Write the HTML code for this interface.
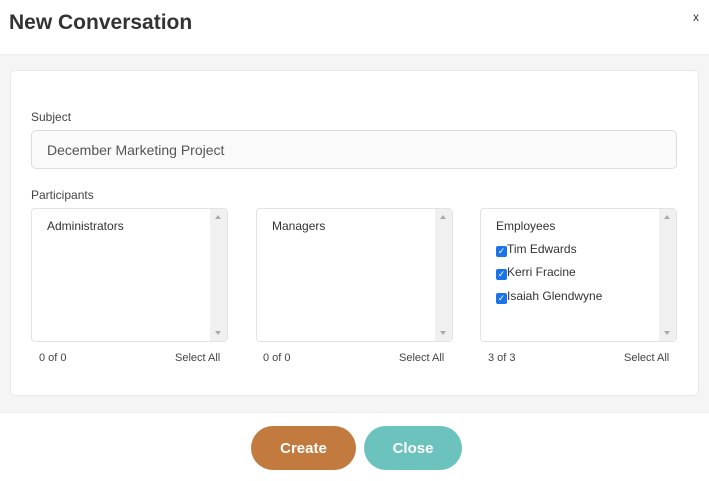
<!DOCTYPE html><html><head><style>
body{margin:0;width:709px;height:481px;background:#fff;font-family:"Liberation Sans",sans-serif;position:relative;overflow:hidden;color:#333}
.a{position:absolute}
h1{position:absolute;left:9px;top:11px;margin:0;font-size:21px;font-weight:bold;color:#333}
.band{left:0;top:54px;width:709px;height:357px;background:#f5f5f5;border-top:1px solid #eee;border-bottom:1px solid #eee}
.card{left:10px;top:70px;width:687px;height:324px;background:#fff;border:1px solid #e8e8e8;border-radius:5px}
.lbl{font-size:12px;color:#444}
.inp{left:31px;top:130px;height:39px;border:1px solid #ddd;border-radius:5px;background:#fafafa;font-size:14px;color:#555;line-height:39px;padding-left:15px;box-sizing:border-box;width:646px}
.box{top:208px;width:197px;height:134px;border:1px solid #e3e3e3;border-radius:4px;box-sizing:border-box;background:#fff;font-size:12px;color:#333}
.sb{position:absolute;right:0;top:0;width:17px;height:100%;background:#f0f0f0}
.sb:before{content:"";position:absolute;left:5px;top:6px;border:3.5px solid transparent;border-bottom:4px solid #aaa;border-top:0}
.sb:after{content:"";position:absolute;left:5px;bottom:6px;border:3.5px solid transparent;border-top:4px solid #aaa;border-bottom:0}
.it{position:absolute;left:15px}
.ck{display:inline-block;width:11px;height:11px;background:#1a73e8;border-radius:2px;vertical-align:-1px;color:#fff;font-size:9px;line-height:11px;text-align:center}
.ft{font-size:11px;color:#444;top:352px}
.btn{top:426px;height:44px;border-radius:22px;color:#fff;font-weight:bold;font-size:15px;line-height:45px;text-align:center}
</style></head><body>
<h1>New Conversation</h1>
<div class="a" style="left:693px;top:10px;font-size:12px">x</div>
<div class="a band"></div>
<div class="a card"></div>
<div class="a lbl" style="left:31px;top:110px">Subject</div>
<div class="a inp">December Marketing Project</div>
<div class="a lbl" style="left:31px;top:188px">Participants</div>
<div class="a box" style="left:31px"><div class="sb"></div><div class="it" style="top:10px">Administrators</div></div>
<div class="a box" style="left:256px"><div class="sb"></div><div class="it" style="top:10px">Managers</div></div>
<div class="a box" style="left:480px"><div class="sb"></div><div class="it" style="top:10px">Employees</div>
<div class="it" style="top:33px"><span class="ck">✓</span>Tim Edwards</div>
<div class="it" style="top:56px"><span class="ck">✓</span>Kerri Fracine</div>
<div class="it" style="top:80px"><span class="ck">✓</span>Isaiah Glendwyne</div></div>
<div class="a ft" style="left:39px">0 of 0</div><div class="a ft" style="left:175px">Select All</div>
<div class="a ft" style="left:263px">0 of 0</div><div class="a ft" style="left:399px">Select All</div>
<div class="a ft" style="left:488px">3 of 3</div><div class="a ft" style="left:624px">Select All</div>
<div class="a btn" style="left:251px;width:105px;background:#c27a3e">Create</div>
<div class="a btn" style="left:364px;width:98px;background:#6cc2bd">Close</div>
</body></html>
